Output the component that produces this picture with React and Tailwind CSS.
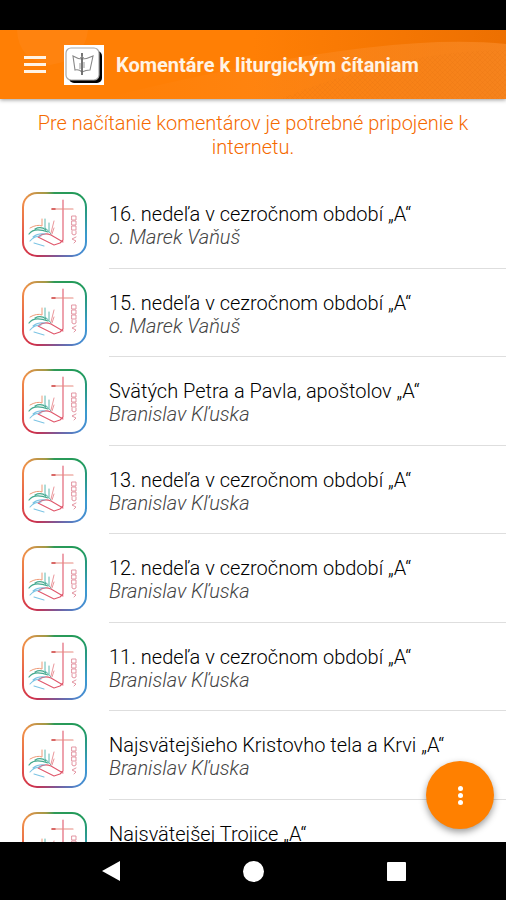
const items = [
  ["16. nedeľa v cezročnom období „A“", "o. Marek Vaňuš"],
  ["15. nedeľa v cezročnom období „A“", "o. Marek Vaňuš"],
  ["Svätých Petra a Pavla, apoštolov „A“", "Branislav Kľuska"],
  ["13. nedeľa v cezročnom období „A“", "Branislav Kľuska"],
  ["12. nedeľa v cezročnom období „A“", "Branislav Kľuska"],
  ["11. nedeľa v cezročnom období „A“", "Branislav Kľuska"],
  ["Najsvätejšieho Kristovho tela a Krvi „A“", "Branislav Kľuska"],
  ["Najsvätejšej Trojice „A“", "Branislav Kľuska"],
];

function SourceIcon() {
  return (
    <span className="size-[65px] shrink-0 rounded-[15px] bg-[conic-gradient(from_0deg,#2f9a58,#1f9a5a_45deg,#3a9ad0_110deg,#4a8ad0_140deg,#7a5a9a_175deg,#d0304a_215deg,#e8604a_260deg,#f09048_310deg,#a09a48_345deg,#2f9a58)] p-[2px]">
      <span className="block size-full rounded-[13px] bg-white">
        <svg viewBox="0 0 61 61" className="size-full" fill="none" strokeLinecap="round" strokeLinejoin="round" aria-hidden="true">
          <path d="M39 6V46l-3 3-6 2L14 43q6-5 13-2l12 7" stroke="#e0586c" strokeWidth="1.1" />
          <path d="M28 15H49" stroke="#e88a80" strokeWidth="1.2" />
          <path d="M28 15h3" stroke="#cf4a4a" strokeWidth="1.5" />
          <path d="M27 40q-3-4-6-6V25M25 37V29" stroke="#5cb8b0" strokeWidth="1" />
          <path d="M27 39l3-12M28 40l2-6" stroke="#e88a90" strokeWidth="0.9" />
          <path d="M6 34q7-4 12-2V25" stroke="#ee9a78" strokeWidth="1" />
          <path d="M5 40q5-7 19-2M11 35q6-3 11 1" stroke="#44a98e" strokeWidth="1.2" />
          <path d="M6 47q4-5 11-5M9 43q5-4 12-3M10 49l10 3" stroke="#7cc4e4" strokeWidth="1.1" />
          <path d="M48 22h4v4h-4zM48 27h4v4h-4zM48 32h4v4h-4zM48 37v3q2 2 4 0v-3M52 43l-4 2 4 2-2 2" stroke="#e08a98" strokeWidth="0.9" />
        </svg>
      </span>
    </span>
  );
}

export default function App() {
  return (
    <div className="flex h-screen flex-col overflow-hidden bg-white font-[Roboto,sans-serif]">
      <div className="h-[30px] shrink-0 bg-black" />
      <header className="relative z-10 flex h-[69px] shrink-0 items-center bg-[#ff7f05] pl-6 shadow-[0_1px_4px_rgba(0,0,0,0.4)]">
        <svg className="absolute inset-0 size-full" viewBox="0 0 506 69" preserveAspectRatio="none" aria-hidden="true">
          <defs>
            <linearGradient id="shade" x1="0" y1="0" x2="1" y2="0">
              <stop offset="0.5" stopColor="#e86c00" stopOpacity="0" />
              <stop offset="1" stopColor="#e86c00" stopOpacity="0.8" />
            </linearGradient>
            <linearGradient id="glow" x1="0" y1="0" x2="1" y2="0">
              <stop offset="0" stopColor="#ff9638" stopOpacity="0" />
              <stop offset="1" stopColor="#ff9638" stopOpacity="0.5" />
            </linearGradient>
            <pattern id="weave" width="5" height="5" patternUnits="userSpaceOnUse">
              <path d="M0 5L5 0M0 0l5 5" stroke="#e47210" strokeWidth="0.6" strokeOpacity="0.4" />
            </pattern>
          </defs>
          <rect width="506" height="69" fill="url(#shade)" />
          <path d="M100 69Q380 0 506 14V69z" fill="url(#glow)" />
          <path d="M280 69Q400 20 506 20V69z" fill="url(#weave)" />
          <path d="M17 0Q18 30 50 35Q85 30 88 0z" fill="#ff9638" fillOpacity="0.2" />
        </svg>
        <button aria-label="Menu" className="relative flex w-[22px] flex-col gap-[4px]">
          <span className="h-[3px] bg-[#fff3e5]" />
          <span className="h-[3px] bg-[#fff3e5]" />
          <span className="h-[3px] bg-[#fff3e5]" />
        </button>
        <svg className="relative ml-[18px] size-10 shrink-0" viewBox="0 0 40 40" fill="none" aria-hidden="true">
          <rect width="40" height="40" fill="#fff" />
          <rect x="5" y="6" width="33" height="32" rx="5" fill="#000" />
          <rect x="2" y="3" width="33" height="32" rx="5" fill="#fff" stroke="#aaa" strokeWidth="1.2" />
          <path d="M18 14q-4 0-9-3l2 14q4-1 7 2 4-2 8-2l3-14q-6 3-11 3z" stroke="#888" strokeWidth="1.1" />
          <path d="M18 8V30" stroke="#666" strokeWidth="1.8" />
          <path d="M16 13q2-3 4 0M16 18v6M20 17v6" stroke="#999" strokeWidth="1" />
        </svg>
        <h1 className="relative ml-3 text-[20px] leading-6 font-bold whitespace-nowrap text-[#fff3e5]">Komentáre k liturgickým čítaniam</h1>
      </header>
      <main className="min-h-0 flex-1 overflow-hidden">
        <p className="h-[81px] px-8 pt-3 text-center text-[20px] leading-6 font-light text-[#f56a00]">
          Pre načítanie komentárov je potrebné pripojenie k internetu.
        </p>
        <ul>
          {items.map(([title, author]) => (
            <li key={title} className="flex h-[89px] gap-[22px] pl-[22px] even:h-[88px]">
              <div className="flex pt-3"><SourceIcon /></div>
              <div className="flex-1 border-b border-[#dedede] pt-[23px] whitespace-nowrap">
                <h2 className="text-[20px] leading-[23px] font-light text-black">{title}</h2>
                <p className="text-[20px] leading-[23px] font-light text-[#444] italic">{author}</p>
              </div>
            </li>
          ))}
        </ul>
      </main>
      <button aria-label="Možnosti" className="absolute right-3 bottom-[71px] z-10 flex size-[68px] flex-col items-center justify-center gap-[2px] rounded-full bg-[#ff8000] shadow-[0_3px_7px_rgba(0,0,0,0.4)]">
        <span className="size-[5px] rounded-full bg-white" />
        <span className="size-[5px] rounded-full bg-white" />
        <span className="size-[5px] rounded-full bg-white" />
      </button>
      <nav className="flex h-[58px] shrink-0 items-center justify-between bg-black pr-[100px] pl-[102px]">
        <button aria-label="Späť">
          <svg className="h-[22px] w-[18px]" viewBox="0 0 18 22"><path d="M18 1V21L0 11z" fill="#fff" /></svg>
        </button>
        <button aria-label="Domov" className="size-[21px] rounded-full bg-white" />
        <button aria-label="Prehľad" className="size-[19px] rounded-[1px] bg-white" />
      </nav>
    </div>
  );
}
